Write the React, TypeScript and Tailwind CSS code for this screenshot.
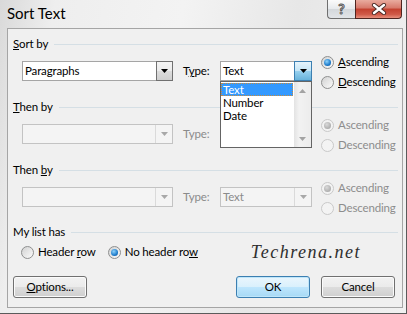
import React from 'react'

// Win7 style "Sort Text" dialog

type ComboState = 'normal' | 'focus' | 'disabled'

function Arrow({ color = '#000' }: { color?: string }) {
  return (
    <svg width="7" height="4" viewBox="0 0 7 4">
      <path d="M0 0h7L3.5 4z" fill={color} />
    </svg>
  )
}

function UpArrow({ color = '#a3a3a3' }: { color?: string }) {
  return (
    <svg width="7" height="4" viewBox="0 0 7 4">
      <path d="M0 4h7L3.5 0z" fill={color} />
    </svg>
  )
}

function Combo({
  value,
  width,
  state,
  children,
}: {
  value?: string
  width: string
  state: ComboState
  children?: React.ReactNode
}) {
  const disabled = state === 'disabled'
  return (
    <div
      className={`relative mt-[9px] flex h-5 ${width} border ${
        disabled ? 'border-[#c3c3c3] bg-[#f4f4f4]' : 'border-[#a5a5a5] bg-white'
      }`}
    >
      <div
        className={`flex flex-1 items-center pl-[2px] text-[11.5px] ${
          disabled ? 'text-[#8b8b8b]' : 'text-black'
        }`}
      >
        {value}
      </div>
      {state === 'normal' && (
        <div className="-my-px -mr-px flex w-[17px] items-center justify-center border border-[#707070] bg-[linear-gradient(#f3f3f3,#ebebeb_50%,#dddddd_50%,#cfcfcf)]">
          <Arrow />
        </div>
      )}
      {state === 'focus' && (
        <div className="-my-px -mr-px flex w-[18px] items-center justify-center border border-[#3c7fb1] bg-[linear-gradient(#e5f4fc,#c4e5f6_50%,#98d1ef_50%,#68b3db)]">
          <Arrow />
        </div>
      )}
      {disabled && (
        <div className="flex w-[17px] items-center justify-center border-l border-[#dadada]">
          <Arrow color="#a8a8a8" />
        </div>
      )}
      {children}
    </div>
  )
}

function RadioDot({ checked, disabled }: { checked?: boolean; disabled?: boolean }) {
  return (
    <span
      className={`flex h-[13px] w-[13px] shrink-0 items-center justify-center rounded-full border ${
        disabled
          ? 'border-[#c9c9c9] bg-[#f3f3f3]'
          : 'border-[#8e8f8f] bg-[linear-gradient(135deg,#d2d2d2,#fbfbfb)]'
      }`}
    >
      {checked && (
        <span
          className={`h-[7px] w-[7px] rounded-full ${
            disabled
              ? 'bg-[radial-gradient(circle_at_40%_35%,#dadada,#9c9c9c)]'
              : 'bg-[radial-gradient(circle_at_40%_35%,#8fd3fb,#1e7ccc_60%,#0b4f93)]'
          }`}
        />
      )}
    </span>
  )
}

function Radio({
  checked,
  disabled,
  children,
}: {
  checked?: boolean
  disabled?: boolean
  children: React.ReactNode
}) {
  return (
    <div className="flex h-5 items-center">
      <RadioDot checked={checked} disabled={disabled} />
      <span
        className={`ml-[4px] text-[11.5px] ${disabled ? 'text-[#8d8d8d]' : 'text-black'}`}
      >
        {children}
      </span>
    </div>
  )
}

function GroupLabel({ children, className = '' }: { children: React.ReactNode; className?: string }) {
  return (
    <div className={`flex h-4 items-center pl-[5px] pr-[4px] ${className}`}>
      <span className="text-[11.5px] leading-4 text-black">{children}</span>
      <div className="ml-[6px] h-px flex-1 bg-[#d5dfe5]" />
    </div>
  )
}

function SortRow({
  first,
  value,
  typeValue,
  disabled,
  children,
}: {
  first?: boolean
  value?: string
  typeValue?: string
  disabled?: boolean
  children?: React.ReactNode
}) {
  return (
    <div className="flex h-10 items-start pl-[14px]">
      <Combo value={value} width="w-[151px]" state={disabled ? 'disabled' : 'normal'} />
      <div
        className={`ml-[10px] mt-[9px] flex h-5 w-[37px] items-center text-[11.5px] ${
          disabled ? 'text-[#8b8b8b]' : 'text-black'
        }`}
      >
        {first ? (
          <span>
            T<u>y</u>pe:
          </span>
        ) : (
          'Type:'
        )}
      </div>
      <Combo value={typeValue} width="w-[92px]" state={first ? 'focus' : 'disabled'}>
        {children}
      </Combo>
      <div className="ml-[9px] flex flex-col">
        <Radio checked disabled={disabled}>
          {first ? (
            <>
              <u>A</u>scending
            </>
          ) : (
            'Ascending'
          )}
        </Radio>
        <Radio disabled={disabled}>
          {first ? (
            <>
              <u>D</u>escending
            </>
          ) : (
            'Descending'
          )}
        </Radio>
      </div>
    </div>
  )
}

function TypeList() {
  return (
    <div className="absolute left-[-1px] top-[19px] z-10 flex h-[67px] w-[92px] border border-[#646464] bg-white">
      <div className="flex flex-1 flex-col pt-px text-[11.5px] leading-[13px]">
        <div className="mr-px h-[13px] overflow-hidden bg-[#3399ff] pl-[2px] text-white outline-1 -outline-offset-1 outline-dotted outline-[#c98b3c]">
          Text
        </div>
        <div className="h-[13px] overflow-hidden pl-[2px]">Number</div>
        <div className="h-[13px] overflow-hidden pl-[2px]">Date</div>
      </div>
      <div className="flex w-[17px] flex-col justify-between bg-[linear-gradient(90deg,#e3e3e3,#f2f2f2_30%,#ececec)]">
        <div className="flex h-[17px] items-center justify-center">
          <UpArrow />
        </div>
        <div className="flex h-[17px] items-center justify-center">
          <Arrow color="#a3a3a3" />
        </div>
      </div>
    </div>
  )
}

function DlgButton({
  children,
  primary,
  className = '',
}: {
  children: React.ReactNode
  primary?: boolean
  className?: string
}) {
  return (
    <button
      className={`flex h-[22px] w-[74px] items-center justify-center rounded-[3px] border text-[11.5px] text-black ${
        primary
          ? 'border-[#3c7fb1] bg-[linear-gradient(#eaf6fd,#d9f0fc_50%,#bee6fd_50%,#a7d9f5)] shadow-[inset_0_0_0_1px_#bfe6fa]'
          : 'border-[#707070] bg-[linear-gradient(#f2f2f2,#ebebeb_50%,#dddddd_50%,#cfcfcf)] shadow-[inset_0_0_0_1px_#fbfbfb]'
      } ${className}`}
    >
      {children}
    </button>
  )
}

export default function App() {
  return (
    <div className="h-[314px] w-[407px] overflow-hidden bg-white font-['Lato','Segoe_UI',sans-serif] tracking-[-0.15px]">
      <div className="flex h-full w-full flex-col border-b border-r border-[#5b5b5b] bg-[linear-gradient(100deg,#d9d9d9,#eeeeee_12%,#f3f3f3_40%,#e7e7e7_65%,#f1f1f1)]">
        {/* Title bar */}
        <div className="flex h-[28px] items-start">
          <div className="pl-[7px] pt-[4px] text-[15px] leading-[18px] tracking-normal text-black">Sort Text</div>
          <div className="ml-auto mr-[4px] flex">
            <div className="flex h-[19px] w-[28px] items-center justify-center rounded-bl-[4px] border border-r-0 border-t-0 border-[#6f6f6f] bg-[linear-gradient(#fbfbfb,#e6e9ec_50%,#d3d7db_50%,#e2e5e8)]">
              <span className="text-[14px] font-bold leading-none text-[#f2f2f2] [-webkit-text-stroke:1px_#5a5a5a]">
                ?
              </span>
            </div>
            <div className="flex h-[19px] w-[47px] items-center justify-center rounded-br-[4px] border border-t-0 border-[#4f2520] bg-[linear-gradient(#e9ab9f,#d7786a_45%,#c3402f_50%,#d05a48_80%,#e8907e)]">
              <svg width="16" height="12" viewBox="0 0 16 12">
                <path d="M3 2L13 10M13 2L3 10" stroke="#4a2a26" strokeWidth="4.2" strokeLinecap="round" />
                <path d="M3 2L13 10M13 2L3 10" stroke="#ffffff" strokeWidth="2.4" strokeLinecap="round" />
              </svg>
            </div>
          </div>
        </div>

        {/* Client area */}
        <div className="ml-[7px] mr-[3px] flex flex-1 flex-col border border-[#a5a5a5] bg-[#f0f0f0] pt-[7px]">
          <GroupLabel>
            <u>S</u>ort by
          </GroupLabel>
          <SortRow first value="Paragraphs" typeValue="Text">
            <TypeList />
          </SortRow>

          <GroupLabel className="mt-[7px]">
            <u>T</u>hen by
          </GroupLabel>
          <SortRow disabled />

          <GroupLabel className="mt-[7px]">
            Then <u>b</u>y
          </GroupLabel>
          <SortRow disabled typeValue="Text" />

          <GroupLabel className="mt-[6px]">My list has</GroupLabel>
          <div className="mt-[2px] flex h-5 items-center pl-[13px] pr-[41px]">
            <Radio>
              Header <u>r</u>ow
            </Radio>
            <div className="ml-[12px]">
              <Radio checked>
                No header ro<u>w</u>
              </Radio>
            </div>
            <span className="ml-auto font-['Liberation_Serif',serif] text-[18px] italic tracking-[1.5px] text-[#2e2e2e]">
              Techrena.net
            </span>
          </div>

          <div className="mt-[14px] flex items-center pl-[5px] pr-[7px]">
            <DlgButton>
              <span>
                <u>O</u>ptions...
              </span>
            </DlgButton>
            <DlgButton primary className="ml-auto">
              OK
            </DlgButton>
            <DlgButton className="ml-[11px]">Cancel</DlgButton>
          </div>
        </div>
        <div className="h-[5px]" />
      </div>
    </div>
  )
}
